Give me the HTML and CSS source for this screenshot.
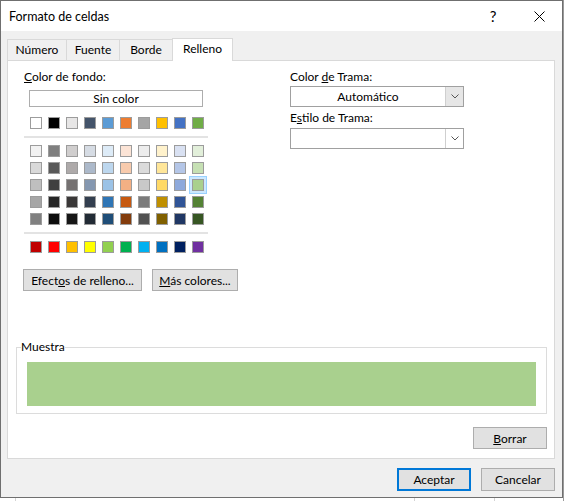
FILE: index.html
```html
<!DOCTYPE html>
<html>
<head>
  <meta charset="UTF-8">
  <title>Formato de celdas</title>
  <link rel="stylesheet" href="styles.css">
</head>
<body>
  <div class="dialog">
    <div class="titlebar">
      <span class="title">Formato de celdas</span>
      <span class="caption-btn help">?</span>
      <span class="caption-btn close">
        <svg width="11" height="11" viewBox="0 0 11 11"><path d="M0.5 0.5L10.5 10.5M10.5 0.5L0.5 10.5" stroke="#000" stroke-width="1" fill="none"/></svg>
      </span>
    </div>

    <div class="tabs">
      <div class="tab tab-numero">Número</div>
      <div class="tab tab-fuente">Fuente</div>
      <div class="tab tab-borde">Borde</div>
      <div class="tab tab-relleno active">Relleno</div>
    </div>

    <div class="panel">
      <div class="panel-top">
        <!-- Color de fondo -->
        <div class="fill-col">
          <div class="label"><u>C</u>olor de fondo:</div>
          <button class="no-color">Sin color</button>

          <div class="swatches theme-row">
            <span class="sw" style="background:#ffffff"></span>
            <span class="sw" style="background:#000000"></span>
            <span class="sw" style="background:#e7e6e6"></span>
            <span class="sw" style="background:#44546a"></span>
            <span class="sw" style="background:#5b9bd5"></span>
            <span class="sw" style="background:#ed7d31"></span>
            <span class="sw" style="background:#a5a5a5"></span>
            <span class="sw" style="background:#ffc000"></span>
            <span class="sw" style="background:#4472c4"></span>
            <span class="sw" style="background:#70ad47"></span>
          </div>

          <div class="sep"></div>

          <div class="swatches tint-grid">
            <span class="sw" style="background:#f2f2f2"></span>
            <span class="sw" style="background:#7f7f7f"></span>
            <span class="sw" style="background:#d0cece"></span>
            <span class="sw" style="background:#d6dce4"></span>
            <span class="sw" style="background:#ddebf7"></span>
            <span class="sw" style="background:#fce4d6"></span>
            <span class="sw" style="background:#ededed"></span>
            <span class="sw" style="background:#fff2cc"></span>
            <span class="sw" style="background:#d9e1f2"></span>
            <span class="sw" style="background:#e2efda"></span>

            <span class="sw" style="background:#d9d9d9"></span>
            <span class="sw" style="background:#595959"></span>
            <span class="sw" style="background:#aeaaaa"></span>
            <span class="sw" style="background:#acb9ca"></span>
            <span class="sw" style="background:#bdd7ee"></span>
            <span class="sw" style="background:#f8cbad"></span>
            <span class="sw" style="background:#dbdbdb"></span>
            <span class="sw" style="background:#ffe699"></span>
            <span class="sw" style="background:#b4c6e7"></span>
            <span class="sw" style="background:#c6e0b4"></span>

            <span class="sw" style="background:#bfbfbf"></span>
            <span class="sw" style="background:#404040"></span>
            <span class="sw" style="background:#757171"></span>
            <span class="sw" style="background:#8497b0"></span>
            <span class="sw" style="background:#9bc2e6"></span>
            <span class="sw" style="background:#f4b084"></span>
            <span class="sw" style="background:#c9c9c9"></span>
            <span class="sw" style="background:#ffd966"></span>
            <span class="sw" style="background:#8ea9db"></span>
            <span class="sw selected" style="background:#a9d08e"></span>

            <span class="sw" style="background:#a6a6a6"></span>
            <span class="sw" style="background:#262626"></span>
            <span class="sw" style="background:#3a3838"></span>
            <span class="sw" style="background:#333f4f"></span>
            <span class="sw" style="background:#2f75b5"></span>
            <span class="sw" style="background:#c65911"></span>
            <span class="sw" style="background:#7b7b7b"></span>
            <span class="sw" style="background:#bf8f00"></span>
            <span class="sw" style="background:#305496"></span>
            <span class="sw" style="background:#548235"></span>

            <span class="sw" style="background:#808080"></span>
            <span class="sw" style="background:#0d0d0d"></span>
            <span class="sw" style="background:#161616"></span>
            <span class="sw" style="background:#222b35"></span>
            <span class="sw" style="background:#1f4e78"></span>
            <span class="sw" style="background:#833c0c"></span>
            <span class="sw" style="background:#525252"></span>
            <span class="sw" style="background:#806000"></span>
            <span class="sw" style="background:#203764"></span>
            <span class="sw" style="background:#375623"></span>
          </div>

          <div class="sep"></div>

          <div class="swatches standard-row">
            <span class="sw" style="background:#c00000"></span>
            <span class="sw" style="background:#ff0000"></span>
            <span class="sw" style="background:#ffc000"></span>
            <span class="sw" style="background:#ffff00"></span>
            <span class="sw" style="background:#92d050"></span>
            <span class="sw" style="background:#00b050"></span>
            <span class="sw" style="background:#00b0f0"></span>
            <span class="sw" style="background:#0070c0"></span>
            <span class="sw" style="background:#002060"></span>
            <span class="sw" style="background:#7030a0"></span>
          </div>

          <div class="fill-buttons">
            <button class="btn btn-effects">Efect<u>o</u>s de relleno...</button>
            <button class="btn btn-more"><u>M</u>ás colores...</button>
          </div>
        </div>

        <!-- Trama -->
        <div class="pattern-col">
          <div class="label">Color <u>d</u>e Trama:</div>
          <div class="combo">
            <span class="combo-value">Automático</span>
            <span class="combo-arrow filled">
              <svg width="8" height="5" viewBox="0 0 8 5"><path d="M0.5 0.5L4 4L7.5 0.5" stroke="#555" fill="none"/></svg>
            </span>
          </div>
          <div class="label label-second">E<u>s</u>tilo de Trama:</div>
          <div class="combo combo-second">
            <span class="combo-value"></span>
            <span class="combo-arrow">
              <svg width="8" height="5" viewBox="0 0 8 5"><path d="M0.5 0.5L4 4L7.5 0.5" stroke="#555" fill="none"/></svg>
            </span>
          </div>
        </div>
      </div>

      <fieldset class="sample">
        <legend>Muestra</legend>
        <div class="sample-fill"></div>
      </fieldset>

      <div class="clear-row">
        <button class="btn btn-clear"><u>B</u>orrar</button>
      </div>
    </div>

    <div class="footer">
      <button class="btn btn-ok">Aceptar</button>
      <button class="btn btn-cancel">Cancelar</button>
    </div>
  </div>
</body>
</html>
```

FILE: styles.css
```css
body {
  margin: 0;
  width: 564px;
  height: 501px;
  overflow: hidden;
  font-family: Lato, "Noto Sans", sans-serif;
  font-size: 12px;
  color: #000;
  background:
    linear-gradient(#d4d4d4, #d4d4d4) 15px 0 / 1px 100% no-repeat,
    linear-gradient(#d4d4d4, #d4d4d4) 414px 0 / 1px 100% no-repeat,
    linear-gradient(#d4d4d4, #d4d4d4) 494px 0 / 1px 100% no-repeat,
    linear-gradient(#9a9a9a, #9a9a9a) 563px 0 / 1px 100% no-repeat,
    #fff;
}

.dialog {
  box-sizing: border-box;
  width: 563px;
  height: 498px;
  border: 1px solid #6f6f6f;
  background-color: #f0f0f0;
  display: flex;
  flex-direction: column;
}

/* Barra de titulo */
.titlebar {
  height: 30px;
  background-color: #fff;
  display: flex;
  align-items: center;
}

.title {
  flex: 1;
  padding-left: 8px;
  font-size: 12.5px;
}

.caption-btn {
  width: 46px;
  height: 30px;
  display: flex;
  align-items: center;
  justify-content: center;
}

.help {
  font-size: 15px;
  color: #000;
  padding-left: 2px;
}

/* Pestanas */
.tabs {
  display: flex;
  align-items: flex-end;
  height: 22px;
  margin: 7px 0 0 6px;
}

.tab {
  box-sizing: border-box;
  height: 21px;
  margin-right: -1px;
  border: 1px solid #d9d9d9;
  border-bottom: none;
  background-color: #f0f0f0;
  text-align: center;
  line-height: 20px;
}

.tab-numero { width: 60px; }
.tab-fuente { width: 54px; }
.tab-borde { width: 54px; }
.tab-relleno { width: 61px; }

.tab.active {
  position: relative;
  height: 23px;
  margin-bottom: -1px;
  background-color: #fff;
  line-height: 19px;
}

/* Panel */
.panel {
  box-sizing: border-box;
  height: 399px;
  margin: 0 7px 0 6px;
  border: 1px solid #d9d9d9;
  background-color: #fff;
}

.panel-top {
  display: flex;
  padding-top: 8px;
}

.fill-col {
  width: 266px;
  padding-left: 16px;
}

.label {
  height: 16px;
  line-height: 16px;
}

button {
  font-family: inherit;
  font-size: 12px;
  color: #000;
  padding: 0;
  box-sizing: border-box;
}

.no-color {
  display: block;
  width: 174px;
  height: 17px;
  margin: 5px 0 0 5px;
  border: 1px solid #adadad;
  background-color: #fff;
  line-height: 14px;
}

.swatches {
  display: grid;
  grid-template-columns: repeat(10, 12px);
  column-gap: 6px;
  row-gap: 5px;
  margin-left: 6px;
}

.theme-row {
  margin-top: 10px;
}

.sw {
  box-sizing: border-box;
  width: 12px;
  height: 12px;
  border: 1px solid #9c9c9c;
}

.sw.selected {
  box-shadow: 0 0 0 2px #cce8ff, 0 0 0 3px #99d1ff;
}

.sep {
  width: 184px;
  height: 2px;
  margin: 7px 0 7px;
  background-color: #e3e3e3;
}

.fill-buttons {
  display: flex;
  gap: 10px;
  margin: 16px 0 0 -1px;
}

.btn {
  height: 22px;
  border: 1px solid #adadad;
  background-color: #e1e1e1;
}

.btn-effects { width: 119px; }
.btn-more { width: 86px; }

.pattern-col {
  width: 174px;
}

.combo {
  box-sizing: border-box;
  display: flex;
  height: 21px;
  margin-top: 1px;
  border: 1px solid #a0a0a0;
  background-color: #fff;
}

.combo-value {
  flex: 1;
  text-align: center;
  line-height: 19px;
}

.combo-arrow {
  width: 17px;
  display: flex;
  align-items: center;
  justify-content: center;
  border-left: 1px solid #cfcfcf;
}

.combo-arrow.filled {
  background-color: #e6e6e6;
}

.label-second {
  margin-top: 3px;
}

.combo-second {
  margin-top: 2px;
}

/* Muestra */
.sample {
  margin: 48px 7px 0 8px;
  padding: 7px 10px 7px 10px;
  border: 1px solid #dcdcdc;
}

.sample legend {
  padding: 0;
  margin-left: -6px;
  line-height: 16px;
}

.sample-fill {
  height: 44px;
  background-color: #a9d08e;
}

.clear-row {
  display: flex;
  justify-content: flex-end;
  margin: 13px 7px 0 0;
}

.btn-clear { width: 74px; }

/* Botones inferiores */
.footer {
  display: flex;
  justify-content: flex-end;
  gap: 10px;
  padding: 9px 7px 0 0;
}

.btn-ok,
.btn-cancel {
  width: 74px;
  height: 23px;
}

.btn-ok {
  border: 2px solid #0078d7;
}
```
